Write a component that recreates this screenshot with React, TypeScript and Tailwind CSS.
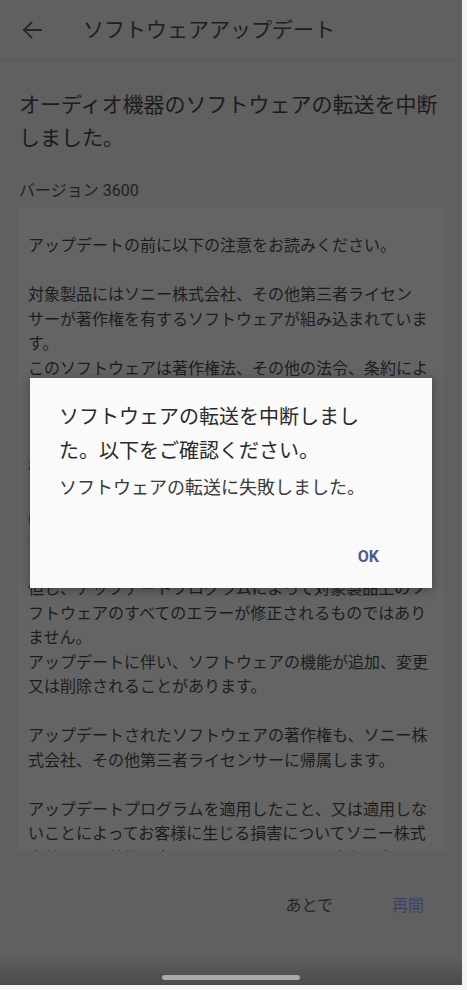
import React from "react";

const FONT = { fontFamily: 'Roboto, "Noto Sans CJK JP", "Noto Sans", sans-serif' };

const notice: string[] = [
  "アップデートの前に以下の注意をお読みください。",
  "",
  "対象製品にはソニー株式会社、その他第三者ライセン",
  "サーが著作権を有するソフトウェアが組み込まれていま",
  "す。",
  "このソフトウェアは著作権法、その他の法令、条約によ",
  "り保護されています。",
  "",
  "アップデートプログラムは、対象製品のソフトウェアの",
  "機能改善のために提供されるものです。",
  "アップデートプログラムを適用することにより、対象製",
  "品のソフトウェアの一部の不具合が修正されることが",
  "あります。",
  "",
  "但し、アップデートプログラムによって対象製品上のソ",
  "フトウェアのすべてのエラーが修正されるものではあり",
  "ません。",
  "アップデートに伴い、ソフトウェアの機能が追加、変更",
  "又は削除されることがあります。",
  "",
  "アップデートされたソフトウェアの著作権も、ソニー株",
  "式会社、その他第三者ライセンサーに帰属します。",
  "",
  "アップデートプログラムを適用したこと、又は適用しな",
  "いことによってお客様に生じる損害についてソニー株式",
  "会社、その他第三者ライセンサーは一切の責任を負いま",
  "せん。",
];

function BackArrow() {
  return (
    <svg width="20" height="18" viewBox="0 0 20 18" fill="none">
      <path
        d="M19 9H2M9.5 1.5L2 9l7.5 7.5"
        stroke="#262626"
        strokeWidth="1.8"
        strokeLinecap="square"
      />
    </svg>
  );
}

function FailedDialog() {
  return (
    <div className="absolute left-[30px] top-[378px] flex h-[210px] w-[402px] flex-col bg-[#fafafa] shadow-[0_2px_10px_rgba(0,0,0,0.35)]">
      <div className="pl-[29px] pt-[22px] text-[20px] leading-[34px] text-[#2a2a2a]">
        <div className="whitespace-nowrap">ソフトウェアの転送を中断しまし</div>
        <div className="whitespace-nowrap">た。以下をご確認ください。</div>
      </div>
      <div className="mt-[7px] whitespace-nowrap pl-[29px] text-[18px] leading-[26px] text-[#3a3a3a]">
        ソフトウェアの転送に失敗しました。
      </div>
      <div className="mt-[44px] flex justify-end pr-[53px]">
        <span className="text-[16px] font-bold leading-[24px] text-[#4b5b8c]">OK</span>
      </div>
    </div>
  );
}

export default function App() {
  return (
    <div className="h-[990px] w-[467px] overflow-hidden bg-[#f4f4f4]" style={FONT}>
      <div className="relative flex h-[985px] w-[462px] flex-col bg-[#606060]">
        <header className="flex h-[61px] items-center border-b border-[#585858]">
          <div className="ml-[22px] flex w-[61px] items-center">
            <BackArrow />
          </div>
          <h1 className="text-[21px] leading-none text-[#1f1f1f]">ソフトウェアアップデート</h1>
        </header>

        <div className="mt-[28px] px-[19px] text-[21px] leading-[33px] text-[#1c1c1c]">
          <div className="whitespace-nowrap">オーディオ機器のソフトウェアの転送を中断</div>
          <div className="whitespace-nowrap">しました。</div>
        </div>

        <div className="mt-[24px] px-[19px] text-[16px] leading-[24px] text-[#222]">
          バージョン 3600
        </div>

        <div className="mx-[18px] mt-[4px] h-[644px] overflow-hidden bg-[#646464] px-[10px] pt-[27px] text-[16px] leading-[24.5px] text-[#1d1d1d]">
          {notice.map((line, i) => (
            <div key={i} className="h-[24.5px] whitespace-nowrap">
              {line}
            </div>
          ))}
        </div>

        <div className="mt-[31px] flex h-[48px] items-center justify-end gap-[59px] pr-[38px] text-[16px]">
          <span className="text-[#242424]">あとで</span>
          <span className="text-[#39426a]">再開</span>
        </div>

        <div className="mt-auto flex h-[30px] justify-center bg-gradient-to-b from-[#606060] to-[#4a4a4a] pt-[20px]">
          <div className="h-[5px] w-[138px] rounded-full bg-[#a9a9a9]" />
        </div>

        <FailedDialog />
      </div>
    </div>
  );
}
